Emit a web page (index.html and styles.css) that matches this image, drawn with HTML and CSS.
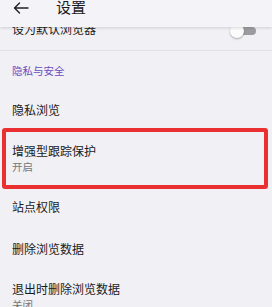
FILE: index.html
```html
<!DOCTYPE html>
<html>
    <head>
        <title>设置</title>
        <link rel="stylesheet" href="styles.css">
    </head>
    <body>
        <main class="screen">
            <header class="topbar">
                <svg class="back" width="16" height="12" viewBox="0 0 16 12">
                    <path d="M15 6H1.5M6.5 1L1.5 6l5 5" fill="none" stroke="#222" stroke-width="1.4" stroke-linecap="round" stroke-linejoin="round"/>
                </svg>
                <h1 class="title">设置</h1>
            </header>
            <div class="list">
                <div class="row row-first">
                    <span class="label">设为默认浏览器</span>
                    <span class="switch"><span class="knob"></span></span>
                </div>
                <div class="section">隐私与安全</div>
                <div class="row">
                    <span class="label">隐私浏览</span>
                </div>
                <div class="row row-two marked">
                    <span class="label">增强型跟踪保护</span>
                    <span class="sub">开启</span>
                </div>
                <div class="row">
                    <span class="label">站点权限</span>
                </div>
                <div class="row">
                    <span class="label">删除浏览数据</span>
                </div>
                <div class="row row-two">
                    <span class="label">退出时删除浏览数据</span>
                    <span class="sub">关闭</span>
                </div>
            </div>
        </main>
    </body>
</html>
```

FILE: styles.css
```css
body{
    margin:0;
    padding:0;
    font-family:"Noto Sans CJK SC", "Noto Sans", sans-serif;
    background-color:#f1f0f5;
    color:#1b1b1b;
}
.screen{
    width:272px;
    height:307px;
    overflow:hidden;
    position:relative;
}
.topbar{
    position:absolute;
    top:0;
    left:0;
    right:0;
    height:27px;
    z-index:2;
    display:flex;
    align-items:flex-start;
    background-color:#f4f3f7;
    box-shadow:0 1px 3px rgba(0,0,0,0.14);
}
.back{
    margin:2px 0 0 13px;
}
.title{
    margin:-3px 0 0 27px;
    font-size:15px;
    font-weight:normal;
    line-height:20px;
}
.list{
    padding-top:8.5px;
}
.row{
    height:41.5px;
    padding:0 12px;
    display:flex;
    flex-direction:column;
    justify-content:center;
    position:relative;
}
.row-first{
    flex-direction:row;
    align-items:center;
    justify-content:space-between;
    border-bottom:1px solid #e2e1e6;
}
.row-two{
    height:55.5px;
}
.label{
    font-size:12px;
    line-height:16px;
}
.sub{
    font-size:10.5px;
    line-height:16px;
    color:#777;
}
.section{
    height:38.25px;
    padding:0 12px;
    display:flex;
    align-items:center;
    font-size:10.5px;
    color:#6a4dbd;
}
.switch{
    width:22px;
    height:8px;
    margin-right:4px;
    margin-top:3px;
    border-radius:4px;
    background-color:#9b9ba0;
    position:relative;
}
.knob{
    position:absolute;
    left:-4px;
    top:-3px;
    width:14px;
    height:14px;
    border-radius:50%;
    background-color:#fbfbfc;
    box-shadow:0 1px 2px rgba(0,0,0,0.3);
}
.marked::after{
    content:"";
    position:absolute;
    top:-3px;
    bottom:-3px;
    left:2px;
    right:4px;
    border:4px solid #ea3030;
    border-radius:3px;
}
```
